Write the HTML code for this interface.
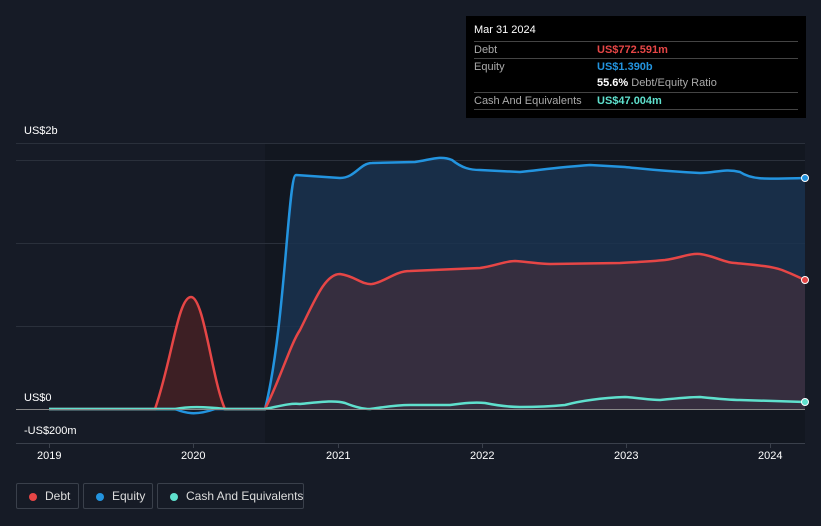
<!DOCTYPE html><html><head><style>
body{margin:0;width:821px;height:526px;background:#161b26;font-family:"Liberation Sans",sans-serif;overflow:hidden;position:relative}
.t{position:absolute;color:#fff;font-size:11px}
.tip{position:absolute;left:466px;top:16px;width:340px;height:102px;background:#000}
.row{position:absolute;left:8px;width:324px;border-top:1px solid #444;font-size:11px;color:#aaa;height:17px;line-height:17px}
.row b{position:absolute;left:123px;font-weight:bold}
.leg{position:absolute;top:483px;height:26px;border:1px solid #3a404b;border-radius:2px;color:#ddd;font-size:12px;line-height:24px;box-sizing:border-box;white-space:nowrap}
.leg i{position:absolute;left:12px;top:9px;width:8px;height:8px;border-radius:50%}
</style></head><body>
<svg width="821" height="526" style="position:absolute;left:0;top:0">
<rect x="265" y="143" width="540" height="300" fill="#121720"/>
<g stroke="#2a303b" stroke-width="1">
<line x1="16" y1="143.5" x2="805" y2="143.5"/><line x1="16" y1="160.5" x2="805" y2="160.5"/><line x1="16" y1="243.5" x2="805" y2="243.5"/><line x1="16" y1="326.5" x2="805" y2="326.5"/>
</g>
<path d="M265,409 C285,330 288,175 296,175 L340,178 C355,178 360,163 372,163 L415,162 C430,160 440,155 452,160 C462,168 470,170 480,170 L520,172 C540,170 560,167 590,165 L625,167 C645,169 660,171 700,173 C715,173 725,168 740,172 C752,180 765,179 805,178 L805,409 Z" fill="#1a3350" opacity="0.85"/>
<path d="M265,409 C280,380 290,345 300,330 C315,300 325,274 340,274 C355,276 362,285 372,284 C385,282 395,271 410,271 L480,268 C495,266 505,261 515,261 C530,262 540,264 550,264 L620,263 C640,262 655,261 665,260 C680,258 690,253 700,254 C715,256 725,263 735,263 C755,265 770,266 782,270 C795,275 800,278 805,280 L805,409 Z" fill="#3a2f3e" opacity="0.9"/>
<path d="M155,409 C172,360 178,297 191,297 C204,297 212,380 225,409 Z" fill="#3d1f24"/>
<path d="M49,409 L175,409 C185,413 195,416 215,409 L265,409 C285,330 288,175 296,175 L340,178 C355,178 360,163 372,163 L415,162 C430,160 440,155 452,160 C462,168 470,170 480,170 L520,172 C540,170 560,167 590,165 L625,167 C645,169 660,171 700,173 C715,173 725,168 740,172 C752,180 765,179 805,178" fill="none" stroke="#2394df" stroke-width="2.5"/>
<path d="M49,409 L155,409 C172,360 178,297 191,297 C204,297 212,380 225,409 L265,409 C280,380 290,345 300,330 C315,300 325,274 340,274 C355,276 362,285 372,284 C385,282 395,271 410,271 L480,268 C495,266 505,261 515,261 C530,262 540,264 550,264 L620,263 C640,262 655,261 665,260 C680,258 690,253 700,254 C715,256 725,263 735,263 C755,265 770,266 782,270 C795,275 800,278 805,280" fill="none" stroke="#e64646" stroke-width="2.5"/>
<path d="M49,409 L175,409 C185,407 200,406 225,409 L265,409 C280,406 290,403 300,404 C320,402 335,400 345,403 C355,407 362,409 370,409 C385,407 395,405 410,405 L450,405 C465,403 475,402 485,403 C500,406 510,407 520,407 C540,407 555,406 565,405 C580,401 600,398 625,397 C640,398 650,400 660,400 C680,398 690,397 700,397 C720,399 730,400 740,400 L805,402" fill="none" stroke="#5fe0cd" stroke-width="2.5"/>
<line x1="16" y1="409.5" x2="805" y2="409.5" stroke="#888" stroke-width="1"/>
<line x1="16" y1="443.5" x2="805" y2="443.5" stroke="#3a404b" stroke-width="1"/>
<g stroke="#3a404b"><line x1="49.5" y1="443" x2="49.5" y2="448"/><line x1="193.5" y1="443" x2="193.5" y2="448"/><line x1="338.5" y1="443" x2="338.5" y2="448"/><line x1="482.5" y1="443" x2="482.5" y2="448"/><line x1="626.5" y1="443" x2="626.5" y2="448"/><line x1="770.5" y1="443" x2="770.5" y2="448"/></g>
<circle cx="805" cy="178" r="3.5" fill="#2394df" stroke="#fff" stroke-width="1"/>
<circle cx="805" cy="280" r="3.5" fill="#e64646" stroke="#fff" stroke-width="1"/>
<circle cx="805" cy="402" r="3.5" fill="#5fe0cd" stroke="#fff" stroke-width="1"/>
</svg>
<div class="t" style="left:24px;top:125px">US$2b</div>
<div class="t" style="left:24px;top:392px">US$0</div>
<div class="t" style="left:24px;top:425px">-US$200m</div>
<div class="t" style="left:37px;top:450px">2019</div>
<div class="t" style="left:181px;top:450px">2020</div>
<div class="t" style="left:326px;top:450px">2021</div>
<div class="t" style="left:470px;top:450px">2022</div>
<div class="t" style="left:614px;top:450px">2023</div>
<div class="t" style="left:758px;top:450px">2024</div>
<div class="tip">
<div style="position:absolute;left:8px;top:8px;color:#fff;font-size:11px">Mar 31 2024</div>
<div class="row" style="top:25px">Debt<b style="color:#e64646">US$772.591m</b></div>
<div class="row" style="top:42px">Equity<b style="color:#2394df">US$1.390b</b></div>
<div class="row" style="top:59px;border:none"><b style="color:#fff">55.6% <span style="color:#aaa;font-weight:normal">Debt/Equity Ratio</span></b></div>
<div class="row" style="top:76px">Cash And Equivalents<b style="color:#5fe0cd">US$47.004m</b></div>
<div class="row" style="top:93px;height:0"></div>
</div>
<div class="leg" style="left:16px;width:63px;padding-left:28px"><i style="background:#e64646"></i>Debt</div>
<div class="leg" style="left:83px;width:70px;padding-left:28px"><i style="background:#2394df"></i>Equity</div>
<div class="leg" style="left:157px;width:147px;padding-left:28px"><i style="background:#5fe0cd"></i>Cash And Equivalents</div>
</body></html>
